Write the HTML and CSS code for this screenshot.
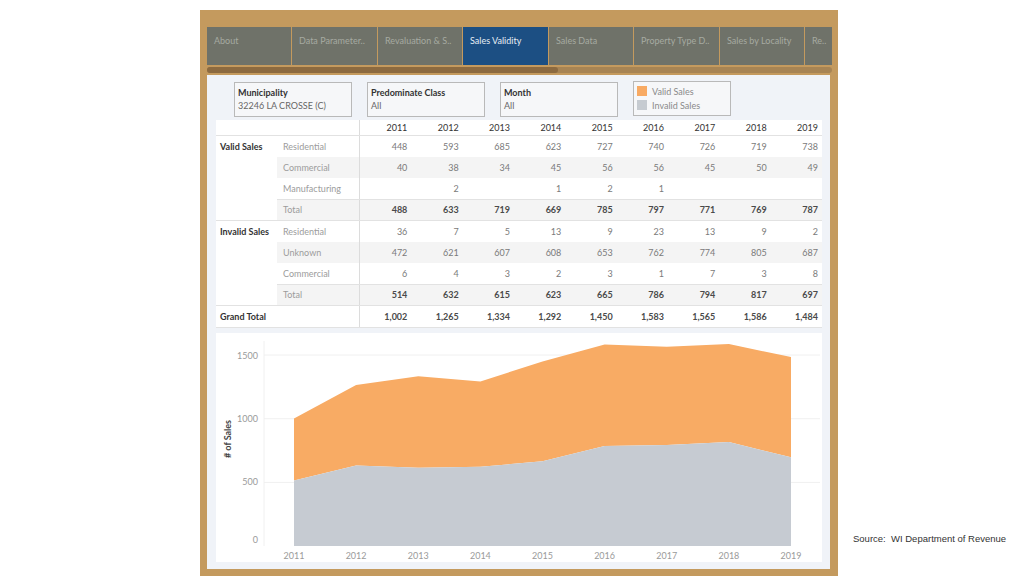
FILE: index.html
```html
<!DOCTYPE html>
<html>
<head>
<meta charset="utf-8">
<link rel="stylesheet" href="styles.css">
</head>
<body>
<div class="slide">
  <div class="frame">
    <nav class="tabs">
      <div class="tab w84">About</div>
      <div class="tab w85">Data Parameter..</div>
      <div class="tab w84">Revaluation &amp; S..</div>
      <div class="tab w85 active">Sales Validity</div>
      <div class="tab w84">Sales Data</div>
      <div class="tab w85">Property Type D..</div>
      <div class="tab w84">Sales by Locality</div>
      <div class="tab last">Re..</div>
    </nav>
    <div class="scroll"><div class="thumb"></div></div>
    <main class="content">
      <div class="filters">
        <div class="filter"><div class="ftitle">Municipality</div><div class="fval">32246 LA CROSSE (C)</div></div>
        <div class="filter"><div class="ftitle">Predominate Class</div><div class="fval">All</div></div>
        <div class="filter"><div class="ftitle">Month</div><div class="fval">All</div></div>
        <div class="legend">
          <div class="li"><span class="sw orange"></span>Valid Sales</div>
          <div class="li"><span class="sw grey"></span>Invalid Sales</div>
        </div>
      </div>

      <div class="xt">
        <div class="hdr">
          <div class="corner"></div>
          <div class="v">2011</div><div class="v">2012</div><div class="v">2013</div><div class="v">2014</div><div class="v">2015</div><div class="v">2016</div><div class="v">2017</div><div class="v">2018</div><div class="v">2019</div>
        </div>
        <div class="group">
          <div class="glabel">Valid Sales</div>
          <div class="grows">
            <div class="r"><div class="sub">Residential</div><div class="v">448</div><div class="v">593</div><div class="v">685</div><div class="v">623</div><div class="v">727</div><div class="v">740</div><div class="v">726</div><div class="v">719</div><div class="v">738</div></div>
            <div class="r alt"><div class="sub">Commercial</div><div class="v">40</div><div class="v">38</div><div class="v">34</div><div class="v">45</div><div class="v">56</div><div class="v">56</div><div class="v">45</div><div class="v">50</div><div class="v">49</div></div>
            <div class="r"><div class="sub">Manufacturing</div><div class="v"></div><div class="v">2</div><div class="v"></div><div class="v">1</div><div class="v">2</div><div class="v">1</div><div class="v"></div><div class="v"></div><div class="v"></div></div>
            <div class="r alt total"><div class="sub">Total</div><div class="v">488</div><div class="v">633</div><div class="v">719</div><div class="v">669</div><div class="v">785</div><div class="v">797</div><div class="v">771</div><div class="v">769</div><div class="v">787</div></div>
          </div>
        </div>
        <div class="group">
          <div class="glabel">Invalid Sales</div>
          <div class="grows">
            <div class="r"><div class="sub">Residential</div><div class="v">36</div><div class="v">7</div><div class="v">5</div><div class="v">13</div><div class="v">9</div><div class="v">23</div><div class="v">13</div><div class="v">9</div><div class="v">2</div></div>
            <div class="r alt"><div class="sub">Unknown</div><div class="v">472</div><div class="v">621</div><div class="v">607</div><div class="v">608</div><div class="v">653</div><div class="v">762</div><div class="v">774</div><div class="v">805</div><div class="v">687</div></div>
            <div class="r"><div class="sub">Commercial</div><div class="v">6</div><div class="v">4</div><div class="v">3</div><div class="v">2</div><div class="v">3</div><div class="v">1</div><div class="v">7</div><div class="v">3</div><div class="v">8</div></div>
            <div class="r alt total"><div class="sub">Total</div><div class="v">514</div><div class="v">632</div><div class="v">615</div><div class="v">623</div><div class="v">665</div><div class="v">786</div><div class="v">794</div><div class="v">817</div><div class="v">697</div></div>
          </div>
        </div>
        <div class="gt">
          <div class="gtl">Grand Total</div>
          <div class="v">1,002</div><div class="v">1,265</div><div class="v">1,334</div><div class="v">1,292</div><div class="v">1,450</div><div class="v">1,583</div><div class="v">1,565</div><div class="v">1,586</div><div class="v">1,484</div>
        </div>
      </div>

      <div class="chart">
        <svg class="plot" width="606" height="229" viewBox="0 0 606 229">
          <g class="grid">
            <line x1="48" y1="22" x2="604" y2="22"/>
            <line x1="48" y1="85.7" x2="604" y2="85.7"/>
            <line x1="48" y1="149.4" x2="604" y2="149.4"/>
            <line x1="48" y1="8" x2="48" y2="213"/>
          </g>
          <polygon class="valid" points="78,85.45 140.1,51.97 202.3,43.18 264.4,48.53 326.5,28.41 388.6,11.48 450.8,13.78 512.9,11.10 575,24.09 575,124.27 512.9,109.00 450.8,111.92 388.6,112.94 326.5,128.35 264.4,133.69 202.3,134.71 140.1,132.55 78,147.57"/>
          <polygon class="invalid" points="78,147.57 140.1,132.55 202.3,134.71 264.4,133.69 326.5,128.35 388.6,112.94 450.8,111.92 512.9,109.00 575,124.27 575,213 78,213"/>
          <g class="ylab">
            <text x="42" y="26">1500</text>
            <text x="42" y="89">1000</text>
            <text x="42" y="152">500</text>
            <text x="42" y="210">0</text>
          </g>
          <text class="ytitle" transform="translate(15,106) rotate(-90)">#&#160;of Sales</text>
          <g class="xlab">
            <text x="78" y="226">2011</text>
            <text x="140.1" y="226">2012</text>
            <text x="202.3" y="226">2013</text>
            <text x="264.4" y="226">2014</text>
            <text x="326.5" y="226">2015</text>
            <text x="388.6" y="226">2016</text>
            <text x="450.8" y="226">2017</text>
            <text x="512.9" y="226">2018</text>
            <text x="575" y="226">2019</text>
          </g>
        </svg>
      </div>
    </main>
  </div>
  <aside class="source">Source:&nbsp; WI Department of Revenue</aside>
</div>
</body>
</html>
```

FILE: styles.css
```css
* { box-sizing: border-box; }
html, body { margin: 0; padding: 0; background: #ffffff; }
body { font-family: Lato, "Open Sans", sans-serif; width: 1024px; height: 576px; overflow: hidden; }

.slide { display: flex; height: 576px; }

.frame {
  margin-left: 200px;
  margin-top: 10px;
  width: 638px;
  height: 566px;
  background: #c49a5e;
  padding: 17px 6px 7px 7px;
  display: flex;
  flex-direction: column;
}

.tabs { display: flex; gap: 1px; height: 38px; overflow: hidden; width: 625px; }
.tab {
  flex: none;
  height: 38px;
  background: #6f7269;
  color: #a6aaa1;
  font-size: 9px;
  padding: 8px 0 0 7px;
  white-space: nowrap;
  overflow: hidden;
}
.w84 { width: 84px; }
.w85 { width: 85px; }
.last { width: 27px; }
.tab.active { background: #1c4f83; color: #e6edf4; }

.scroll { margin-top: 2px; height: 6px; background: #a78454; border-radius: 3px; width: 625px; }
.thumb { width: 351px; height: 6px; background: #8c6a40; border-radius: 3px; }

.content {
  margin-top: 2px;
  width: 623px;
  height: 494px;
  background: #f0f3f8;
  padding: 6px 8px 7px 9px;
  display: flex;
  flex-direction: column;
}

.filters { display: flex; gap: 15px; height: 36px; padding-left: 18px; align-items: flex-start; }
.filter {
  width: 118px;
  height: 35px;
  margin-top: 1px;
  border: 1px solid #b9b9b9;
  background: #f6f7f9;
  padding: 3px 3px;
  font-size: 9px;
  line-height: 13px;
}
.ftitle { color: #333333; font-weight: 700; }
.fval { color: #666666; }
.legend {
  width: 98px;
  height: 35px;
  border: 1px solid #b9b9b9;
  background: #f6f7f9;
  padding: 2px 3px;
  font-size: 9px;
  color: #8a8a8a;
}
.li { display: flex; align-items: center; gap: 5px; height: 14px; }
.sw { width: 10px; height: 10px; display: inline-block; }
.sw.orange { background: #f8aa63; }
.sw.grey { background: #c6cbd1; }

.xt { margin-top: 3px; background: #ffffff; display: flex; flex-direction: column; font-size: 9px; color: #7a7a7a; }
.v { flex: 1; text-align: right; padding-right: 4px; }
.hdr { display: flex; height: 16px; line-height: 15px; border-bottom: 1px solid #e2e2e2; color: #333333; }
.corner { width: 144px; border-right: 1px solid #dcdcdc; }
.group { display: flex; border-bottom: 1px solid #e2e2e2; }
.glabel { width: 61px; padding-left: 4px; line-height: 21px; color: #333333; font-weight: 700; }
.grows { flex: 1; display: flex; flex-direction: column; }
.r { display: flex; height: 21px; line-height: 21px; }
.r.alt { background: #f4f4f4; }
.r.total { border-top: 1px solid #e2e2e2; line-height: 19px; color: #4a4a4a; font-weight: 700; }
.sub { width: 83px; padding-left: 6px; border-right: 1px solid #dcdcdc; color: #9c9c9c; font-weight: 400; }
.gt { display: flex; height: 22px; line-height: 21px; border-bottom: 1px solid #e2e2e2; color: #4a4a4a; font-weight: 700; }
.gtl { width: 144px; padding-left: 4px; border-right: 1px solid #dcdcdc; color: #333333; }

.chart { margin-top: 5px; height: 229px; background: #ffffff; }
.plot { display: block; font-family: Lato, "Open Sans", sans-serif; }
.grid line { stroke: #f0f0f0; stroke-width: 1; }
.valid { fill: #f8ab64; }
.invalid { fill: #c6cbd2; }
.ylab text { fill: #9a9a9a; font-size: 9px; text-anchor: end; }
.xlab text { fill: #9a9a9a; font-size: 9px; text-anchor: middle; }
.ytitle { fill: #444444; font-size: 9px; font-weight: 700; text-anchor: middle; }

.source {
  display: flex;
  flex-direction: column;
  justify-content: flex-end;
  padding: 0 0 32px 15px;
  font-family: "Liberation Sans", Arial, sans-serif;
  font-size: 9.5px;
  color: #333333;
  white-space: nowrap;
}
```
